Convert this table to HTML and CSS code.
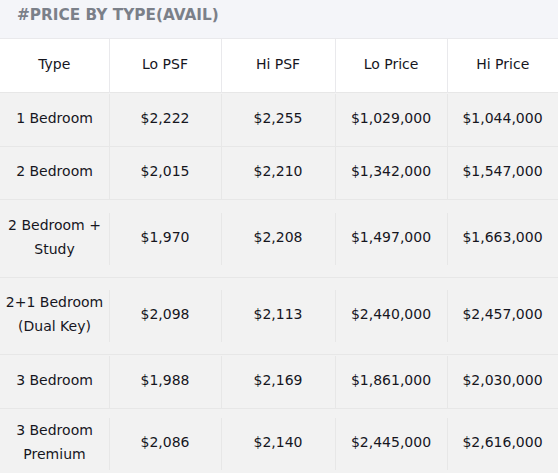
FILE: index.html
```html
<!DOCTYPE html>
<html>
<head>
<meta charset="utf-8">
<link rel="stylesheet" href="styles.css">
</head>
<body>
<div class="panel">
  <div class="title">#PRICE BY TYPE(AVAIL)</div>
  <table class="prices">
    <colgroup>
      <col class="c1"><col class="c2"><col class="c3"><col class="c4"><col class="c5">
    </colgroup>
    <thead>
      <tr><th>Type</th><th>Lo PSF</th><th>Hi PSF</th><th>Lo Price</th><th>Hi Price</th></tr>
    </thead>
    <tbody>
      <tr class="r1"><td>1 Bedroom</td><td>$2,222</td><td>$2,255</td><td>$1,029,000</td><td>$1,044,000</td></tr>
      <tr class="r2"><td>2 Bedroom</td><td>$2,015</td><td>$2,210</td><td>$1,342,000</td><td>$1,547,000</td></tr>
      <tr class="r3"><td>2 Bedroom +<br>Study</td><td>$1,970</td><td>$2,208</td><td>$1,497,000</td><td>$1,663,000</td></tr>
      <tr class="r4"><td>2+1 Bedroom<br>(Dual Key)</td><td>$2,098</td><td>$2,113</td><td>$2,440,000</td><td>$2,457,000</td></tr>
      <tr class="r5"><td>3 Bedroom</td><td>$1,988</td><td>$2,169</td><td>$1,861,000</td><td>$2,030,000</td></tr>
      <tr class="r6"><td>3 Bedroom<br>Premium</td><td>$2,086</td><td>$2,140</td><td>$2,445,000</td><td>$2,616,000</td></tr>
    </tbody>
  </table>
</div>
</body>
</html>
```

FILE: styles.css
```css
html, body {
  margin: 0;
  padding: 0;
  background: #f2f2f2;
}
.panel {
  width: 558px;
  font-family: "DejaVu Sans", sans-serif;
  color: #16161e;
}
.title {
  height: 38px;
  box-sizing: border-box;
  padding: 5px 0 0 17px;
  background: #f4f5f9;
  color: #7b8089;
  font-weight: bold;
  font-size: 15.3px;
  line-height: 20px;
}
.prices {
  width: 558px;
  border-collapse: collapse;
  table-layout: fixed;
  font-size: 14px;
  line-height: 24px;
}
.c1 { width: 109px; }
.c2 { width: 112px; }
.c3 { width: 114px; }
.c4 { width: 112px; }
.c5 { width: 111px; }
.prices th, .prices td {
  text-align: center;
  vertical-align: middle;
  padding: 0 0 4px;
  font-weight: normal;
}
.prices th {
  height: 49px;
  background: #fff;
  border-top: 1px solid #e9e9ec;
  border-left: 1px solid #e9e9ec;
}
.prices th:first-child, .prices td:first-child {
  border-left: none;
}
.prices td {
  background: #f2f2f2 linear-gradient(#e7e7e7, #e7e7e7) left center / 1px 52px no-repeat;
  border-top: 1px solid #e7e7e7;
}
.prices td:first-child {
  background-image: none;
}
.r1 td { height: 49px; }
.r2 td { height: 48px; }
.r3 td { height: 73px; }
.r4 td { height: 72px; }
.r5 td { height: 49px; }
.r6 td { height: 66px; }
```
